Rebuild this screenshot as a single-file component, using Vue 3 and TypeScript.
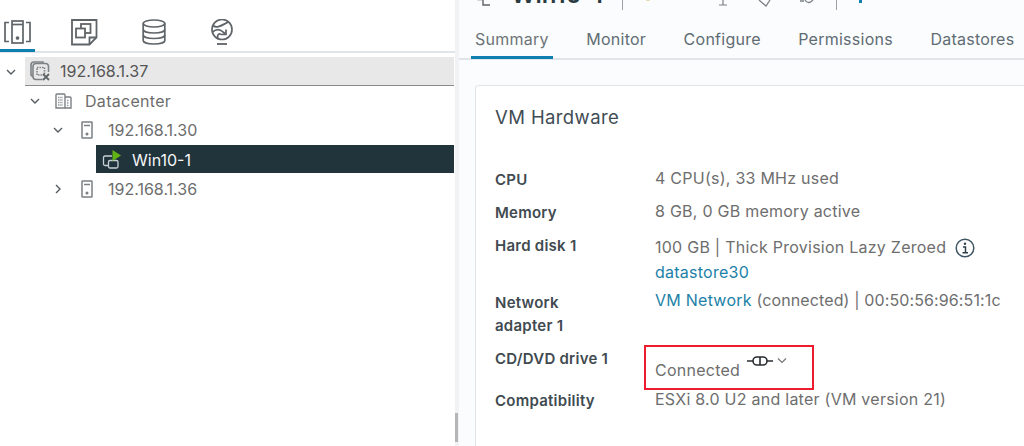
<script setup lang="ts">
interface Line { text: string; link?: boolean; rest?: string; info?: boolean }
interface Row { label: string; lines: Line[]; cls: string }
const rows: Row[] = [
  { label: 'CPU', cls: 'r-cpu', lines: [{ text: '4 CPU(s), 33 MHz used' }] },
  { label: 'Memory', cls: 'r-mem', lines: [{ text: '8 GB, 0 GB memory active' }] },
  { label: 'Hard disk 1', cls: 'r-disk', lines: [{ text: '100 GB | Thick Provision Lazy Zeroed', info: true }, { text: 'datastore30', link: true }] },
  { label: 'Network adapter 1', cls: 'r-net', lines: [{ text: 'VM Network', link: true, rest: ' (connected) | 00:50:56:96:51:1c' }] },
]
const tabs = ['Summary', 'Monitor', 'Configure', 'Permissions', 'Datastores']
</script>

<template>
  <div class="page">
    <aside class="left">
      <nav class="icon-tabs">
        <div class="itab active">
          <svg width="27" height="24" viewBox="0 0 27 24" fill="none" stroke="#5f6468" stroke-width="1.700">
            <path d="M5 2.500H1V21.500H5M22 2.500H26V21.500H22" />
            <rect x="8" y="1" width="11" height="22" />
            <path d="M8 4.500H19" />
            <circle cx="13.500" cy="18" r="1" fill="#5f6468" />
          </svg>
        </div>
        <div class="itab i2">
          <svg width="27" height="27" viewBox="0 0 27 27" fill="none" stroke="#5f6468" stroke-width="1.800">
            <path d="M1 1H25.500V18.500L18.500 25.500H1Z" />
            <path d="M25.500 18.500H18.500V25.500" />
            <rect x="10" y="5" width="9.500" height="9" />
            <rect x="5" y="9.500" width="9" height="9" fill="#fff" />
          </svg>
        </div>
        <div class="itab i3">
          <svg width="24" height="26" viewBox="0 0 24 26" fill="none" stroke="#5f6468" stroke-width="1.700">
            <ellipse cx="12" cy="4.500" rx="10.800" ry="3.500" />
            <path d="M1.200 4.500V21.500C1.200 23.500 6 25 12 25S22.800 23.500 22.800 21.500V4.500" />
            <path d="M1.200 10.500C1.200 12.500 6 14 12 14S22.800 12.500 22.800 10.500M1.200 16C1.200 18 6 19.500 12 19.500S22.800 18 22.800 16" />
          </svg>
        </div>
        <div class="itab i4">
          <svg width="24" height="26" viewBox="0 0 24 26" fill="none" stroke="#5f6468" stroke-width="1.700">
            <circle cx="12" cy="10.500" r="10" />
            <path d="M3 6.500C7 10 12 6 18.500 3" />
            <path d="M2.500 13C6 10 10 10 13 13L16 15.500M16 10.500V15.500H11M8 19.500C6.500 16 9 14 11 15.500" />
            <path d="M7 25H17" stroke-width="1.800" />
          </svg>
        </div>
      </nav>

      <div class="tree">
        <div class="node root">
          <svg class="chev" width="12" height="12" viewBox="0 0 12 12"><path d="M2 4L6 8L10 4" fill="none" stroke="#565c60" stroke-width="1.400" /></svg>
          <div class="root-box">
            <svg width="20" height="20" viewBox="0 0 20 20" fill="none" stroke="#7d8286" stroke-width="1.600">
              <path d="M13 2.500V1H4Q1 1 1 4V13.500Q1 15 3 15" />
              <path d="M12.500 18.500H6Q3 18.500 3 15.500V5.500Q3 2.500 6 2.500H15.500Q18.500 2.500 18.500 5.500V11" />
              <rect x="7" y="6.500" width="7.500" height="7.500" stroke-dasharray="1.500 1" />
              <path d="M13 13L19 19M19 13L13 19" stroke="#5f6468" stroke-width="1.800" />
            </svg>
            <span class="root-text">192.168.1.37</span>
          </div>
        </div>
        <div class="node dc">
          <svg class="chev" width="12" height="12" viewBox="0 0 12 12"><path d="M2 4L6 8L10 4" fill="none" stroke="#565c60" stroke-width="1.400" /></svg>
          <svg width="17" height="16" viewBox="0 0 17 16" fill="none" stroke="#7b8084" stroke-width="1.400">
            <path d="M1 15V2Q1 1 2 1H9Q10 1 10 2V15Z" />
            <path d="M10 4H15Q16 4 16 5V15H10" />
            <path d="M3 4.500H8M3 7H8M3 9.500H8M3 12H8M12 7.500H14M12 10H14M12 12.500H14" stroke-dasharray="1.500 0.700" stroke="#9a9ea1" />
          </svg>
          <span class="label dc-label">Datacenter</span>
        </div>
        <div class="node h1">
          <svg class="chev" width="12" height="12" viewBox="0 0 12 12"><path d="M2 4L6 8L10 4" fill="none" stroke="#565c60" stroke-width="1.400" /></svg>
          <svg width="12" height="18" viewBox="0 0 12 18" fill="none" stroke="#7b8084" stroke-width="1.500">
            <rect x="1" y="1" width="10" height="16" rx="0.500" />
            <path d="M3 4.500H9" />
            <circle cx="6" cy="13" r="0.800" fill="#7b8084" />
          </svg>
          <span class="label">192.168.1.30</span>
        </div>
        <div class="node vm">
          <svg width="20" height="20" viewBox="0 0 20 20" fill="none" stroke="#c7d0d4" stroke-width="1.300">
            <path d="M10 7H3Q1.500 7 1.500 8.500V15Q1.500 16.500 3 16.500H6.500" />
            <rect x="6.500" y="11.500" width="9.500" height="7.500" rx="1.500" />
            <path d="M10.500 1L19 6.500L10.500 12Z" fill="#60b515" stroke="none" />
          </svg>
          <span class="vm-text">Win10-1</span>
        </div>
        <div class="node h2">
          <svg class="chev" width="12" height="12" viewBox="0 0 12 12"><path d="M4 2L8 6L4 10" fill="none" stroke="#565c60" stroke-width="1.400" /></svg>
          <svg width="12" height="18" viewBox="0 0 12 18" fill="none" stroke="#7b8084" stroke-width="1.500">
            <rect x="1" y="1" width="10" height="16" rx="0.500" />
            <path d="M3 4.500H9" />
            <circle cx="6" cy="13" r="0.800" fill="#7b8084" />
          </svg>
          <span class="label">192.168.1.36</span>
        </div>
      </div>
    </aside>

    <div class="scroll-track"><div class="scroll-thumb"></div></div>

    <main class="right">
      <div class="head">
        <svg class="vm-ic" width="19" height="12" viewBox="0 0 19 12" fill="none" stroke="#5f6468" stroke-width="1.400">
          <path d="M1 0V5.500H6M6 0V4M6 4H17V0M6 4V11H13" />
        </svg>
        <span class="title">Win10-1</span>
        <span class="sep"></span>
        <span class="mini"></span>
        <svg class="hi" width="12" height="6" viewBox="0 0 12 6" fill="none" stroke="#7b8084" stroke-width="1.200"><path d="M6 0V5M2 5H10" /></svg>
        <svg class="hi2" width="14" height="7" viewBox="0 0 14 7" fill="none" stroke="#7b8084" stroke-width="1.300"><path d="M1 0L8 6L12 0" /></svg>
        <svg class="hi3" width="16" height="5" viewBox="0 0 16 5" fill="none" stroke="#7b8084" stroke-width="1.300"><path d="M1 1H5M6 0Q9 5 14 0" /></svg>
        <span class="sep s2"></span>
        <span class="blue-dot"></span>
      </div>

      <div class="tabs">
        <div v-for="(t, i) in tabs" :key="t" class="tab" :class="{ on: i === 0 }">{{ t }}</div>
      </div>

      <section class="card">
        <h2>VM Hardware</h2>
        <div class="grid">
          <template v-for="r in rows" :key="r.label">
            <div class="k" :class="r.cls">{{ r.label }}</div>
            <div class="v" :class="r.cls">
              <div v-for="l in r.lines" :key="l.text" class="line">
                <span :class="{ link: l.link }">{{ l.text }}</span><span v-if="l.rest" class="rest">{{ l.rest }}</span>
                <svg v-if="l.info" class="info" width="20" height="20" viewBox="0 0 20 20" fill="none">
                  <circle cx="10" cy="10" r="8.800" stroke="#3f5563" stroke-width="1.500" />
                  <circle cx="10" cy="5.800" r="1.200" fill="#2f3f4a" />
                  <path d="M8 9H10.500V14.500M7.500 14.800H13" stroke="#2f3f4a" stroke-width="1.500" />
                </svg>
              </div>
            </div>
          </template>
          <div class="k r-cd">CD/DVD drive 1</div>
          <div class="v r-cd">
            <div class="cd-box">
              <span class="cd-text">Connected</span>
              <svg class="plug" width="26" height="10" viewBox="0 0 26 10" fill="none" stroke="#2a2f33">
                <path d="M0 5H6M20 5H26" stroke-width="1.500" />
                <rect x="6" y="1" width="14" height="8" rx="4" stroke-width="1.600" />
                <path d="M13 1V9" stroke-width="1.600" />
              </svg>
              <svg class="caret" width="10" height="8" viewBox="0 0 10 8" fill="none" stroke="#6f7478" stroke-width="1.100"><path d="M1 1.500L5 5.500L9 1.500" /></svg>
            </div>
          </div>
          <div class="k r-comp">Compatibility</div>
          <div class="v r-comp"><div class="line">ESXi 8.0 U2 and later (VM version 21)</div></div>
        </div>
      </section>
    </main>
  </div>
</template>

<style>
html, body { margin: 0; background: #fff; }
</style>

<style scoped>
.page {
  width: 1024px;
  height: 446px;
  overflow: hidden;
  display: flex;
  background: #fff;
  font-family: Inter, "Noto Sans", sans-serif;
  color: #666;
}
.left { width: 454px; flex: none; }
.icon-tabs {
  height: 51px;
  display: flex;
  align-items: flex-start;
  border-bottom: 2px solid #dfe5e9;
  margin-right: -2px;
}
.itab { height: 51px; padding-top: 19px; box-sizing: border-box; }
.itab.active {
  width: 35px;
  padding: 20px 0 0 4px;
  border-bottom: 3px solid #0f7fb0;
  height: 52px;
}
.i2 { margin-left: 36px; }
.i3 { margin-left: 44px; }
.i4 { margin-left: 44px; }
.tree { padding-top: 4px; }
.node { display: flex; align-items: center; height: 29.500px; }
.label { font-size: 16px; color: #6d6d6d; }
.dc-label { letter-spacing: 0.300px; }
.chev { flex: none; }
.root { height: 29px; padding-left: 5px; }
.root-box {
  margin-left: 8px;
  flex: 1;
  height: 29px;
  background: #e8e8e8;
  border-bottom: 1px solid #8b8b8b;
  display: flex;
  align-items: center;
  padding-left: 5px;
  box-sizing: border-box;
}
.root-text { margin-left: 10px; font-size: 16px; color: #555; }
.dc { padding-left: 29px; }
.dc svg + svg { margin-left: 14px; }
.dc .label { margin-left: 13px; }
.h1 { padding-left: 52px; }
.h1 svg + svg, .h2 svg + svg { margin-left: 17px; }
.h1 .label, .h2 .label { margin-left: 15px; }
.vm {
  margin-left: 96px;
  height: 28px;
  background: #21333b;
  padding-left: 6px;
}
.vm-text { margin-left: 10px; padding-top: 1px; color: #f4f6f7; font-size: 16px; }
.h2 { padding-left: 52px; margin-top: 1px; }
.h2 .label { padding-top: 1px; }
.scroll-track {
  width: 4px;
  flex: none;
  margin-left: 1px;
  background: #f1f2f3;
  padding-top: 413px;
  box-sizing: border-box;
}
.scroll-thumb { width: 3px; height: 29px; background: #b5b5b5; }
.right {
  flex: 1;
  min-width: 0;
  background: #fbfcfd;
}
.head {
  height: 10px;
  display: flex;
  align-items: flex-start;
  padding-left: 18px;
  overflow: hidden;
}
.vm-ic { margin-top: -6px; flex: none; }
.title {
  flex: none;
  width: 92px;
  font-size: 24px;
  line-height: 24px;
  font-weight: 600;
  color: #2c3a42;
  margin: -17px 0 0 15px;
  white-space: nowrap;
}
.sep { flex: none; width: 1px; height: 10px; background: #9aa0a4; margin-left: 19px; }
.s2 { margin-left: 21px; }
.mini { flex: none; width: 4px; height: 1px; background: #e8e0b0; margin-left: 23px; }
.hi { flex: none; margin-left: 67px; }
.hi2 { flex: none; margin-left: 29px; }
.hi3 { flex: none; margin-left: 27px; }
.blue-dot { flex: none; width: 3px; height: 3px; background: #0f7fb0; margin-left: 22px; }
.tabs {
  height: 48px;
  display: flex;
  gap: 37.500px;
  padding: 0 0 0 16px;
  border-bottom: 2px solid #dfe5e9;
  align-items: flex-end;
}
.tab {
  font-size: 16px;
  line-height: 20px;
  letter-spacing: 0.250px;
  color: #5f6c74;
  height: 29px;
  box-sizing: border-box;
  white-space: nowrap;
}
.tab.on {
  color: #6d7478;
  margin: 0 -4px -1px -4px;
  padding: 0 4px;
  border-bottom: 3px solid #0f7fb0;
  height: 30px;
}
.card {
  margin: 25px 0 0 16px;
  height: 400px;
  background: #fff;
  border: 1px solid #dfe5e9;
  border-right: none;
  border-radius: 4px 0 0 0;
  padding: 19px 0 0 19px;
  box-sizing: border-box;
}
h2 {
  margin: 0;
  height: 24px;
  font-size: 18.500px;
  letter-spacing: 0.400px;
  line-height: 24px;
  font-weight: 400;
  color: #3f4c54;
}
.grid {
  margin-top: 37px;
  display: grid;
  grid-template-columns: 160px 1fr;
  grid-template-rows: 33px 33px 57px 56px 42px 40px;
}
.k {
  font-size: 15px;
  letter-spacing: 0.250px;
  font-weight: 600;
  color: #404a50;
  line-height: 23px;
  margin-top: 2px;
}
.v { font-size: 16px; letter-spacing: 0.250px; color: #6e6e6e; }
.line { line-height: 24px; display: flex; align-items: center; white-space: pre; }
.link { color: #1b81a8; }
.rest { letter-spacing: 0.120px; }
.info { margin: 2px 0 0 9px; flex: none; }
.v.r-disk { margin-top: 3px; }
.line + .line { margin-top: 1px; }
.k.r-net { width: 100px; }
.v.r-net { margin-top: -1px; }
.v.r-cd { position: relative; }
.cd-box {
  position: absolute;
  left: -11px;
  top: 0;
  width: 170px;
  height: 45px;
  border: 2.500px solid #ed1c2e;
  box-sizing: border-box;
}
.cd-text { position: absolute; left: 9px; top: 11px; line-height: 24px; }
.plug { position: absolute; left: 101px; top: 9px; }
.caret { position: absolute; left: 131px; top: 10px; }
</style>
